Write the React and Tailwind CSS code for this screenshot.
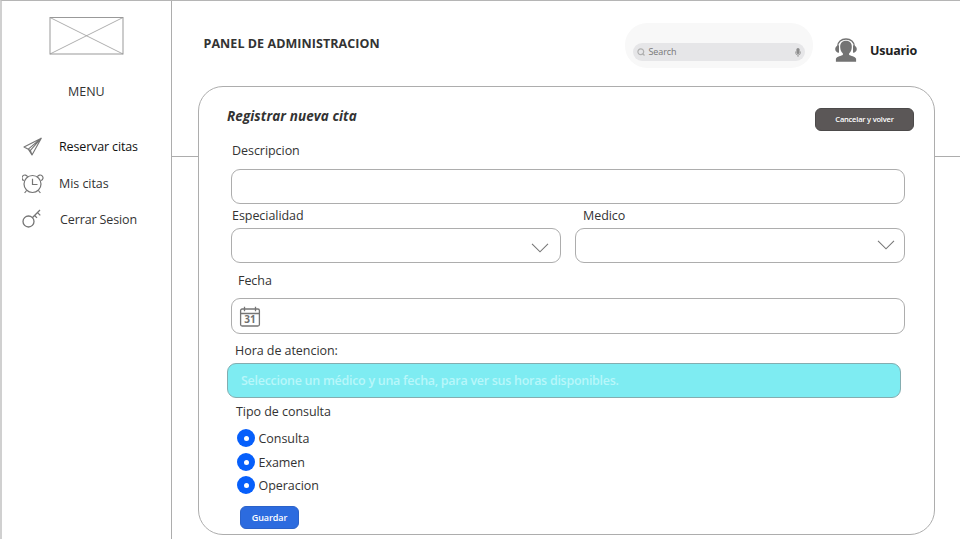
import React from "react";

const base = "whitespace-nowrap leading-[18px]";
const ink = `${base} text-[#333]`;
const label = "h-[18px] whitespace-nowrap text-[12.5px] leading-[20px] tracking-[-0.05px] text-[#333]";

function PlaneIcon() {
  return (
    <svg width="20" height="20" viewBox="0 0 20 20" fill="none" stroke="#757575" strokeWidth="1.1" strokeLinejoin="round">
      <path d="M18.300 1.200 1 10l4.300 2.200L9 18zM18.300 1.200 5.300 12.200M18.300 1.200 7.400 13.400 9 18M5.300 12.200l2.100 1.200" />
    </svg>
  );
}

function ClockIcon() {
  return (
    <svg width="22" height="20" viewBox="0 0 22 20" fill="none" stroke="#757575" strokeWidth="1.2">
      <circle cx="10.500" cy="10" r="8.500" />
      <path d="M10.500 4.800v5.700h5M4.600 16.500 2.600 19M16.400 16.500l2 2.500M1.800 6.600A2.900 2.900 0 1 1 5.600 2.900M19.200 6.600A2.900 2.900 0 1 0 15.400 2.900" />
    </svg>
  );
}

function KeyIcon() {
  return (
    <svg width="20" height="20" viewBox="0 0 20 20" fill="none" stroke="#757575" strokeWidth="1.3">
      <circle cx="6.500" cy="12.500" r="5.500" />
      <path d="M10.300 8.700 18 1M12.600 6.500l2.400 2.400M15.500 3.600l2.800 2.800" />
    </svg>
  );
}

function AgentIcon() {
  return (
    <svg width="22" height="24" viewBox="0 0 22 24" fill="#737373">
      <path d="M2.600 8.800C2.600 4 6.400 1 11 1s8.400 3 8.400 7.800" fill="none" stroke="#737373" strokeWidth="1.400" />
      <path d="M4 7.200v7.600C1.600 14.600.2 13 .2 11s1.400-3.600 3.800-3.800zM18 7.200v7.600c2.400-.2 3.800-1.800 3.800-3.800S20.400 7.400 18 7.200z" />
      <path d="M11 2.800c-3.900 0-6 2.700-5.800 6.400.2 2.800 1.100 4.900 2.700 6.300v1.300C6.500 18 1.700 18.500.9 20.800V23.700h20.200v-2.900c-.8-2.300-5.600-2.800-7-4v-1.300c1.600-1.400 2.500-3.500 2.700-6.300.2-3.700-1.900-6.400-5.800-6.400z" />
    </svg>
  );
}

function CalendarIcon() {
  return (
    <svg width="22" height="22" viewBox="0 0 22 22" fill="none" stroke="#757575" strokeWidth="1.3">
      <rect x="1.600" y="3" width="18.800" height="17" rx="1.500" />
      <path d="M1.600 7.500h18.800M5.500.800v4.500M16.500.800v4.500" />
      <text x="11" y="17.300" textAnchor="middle" fontSize="10" fontWeight="700" fill="#707070" stroke="none">31</text>
    </svg>
  );
}

function Chevron() {
  return (
    <svg width="18" height="10" viewBox="0 0 18 10" fill="none" stroke="#777" strokeWidth="1.1">
      <path d="m1 .8 8 8 8-8" />
    </svg>
  );
}

function MenuItem({ icon, iconBox, children, className }) {
  return (
    <div className="flex h-[36.5px] items-center">
      <span className={iconBox}>{icon}</span>
      <span className={`whitespace-nowrap pt-0.5 text-[12.5px] leading-[18px] ${className}`}>{children}</span>
    </div>
  );
}

function Radio({ label: text, className }) {
  return (
    <label className={`flex items-center ${className}`}>
      <span className="flex size-[18px] items-center justify-center rounded-full bg-[#065ffb]">
        <span className="size-[5px] rounded-full bg-white" />
      </span>
      <span className={`${label} ml-[3.5px]`}>{text}</span>
    </label>
  );
}

const field = "flex items-center rounded-[9px] border border-[#adadad] bg-white";

export default function App() {
  return (
    <div className="flex h-[539px] w-[960px] overflow-hidden border-l-2 border-t border-l-[#d0d0d0] border-t-[#b5b5b5] bg-white font-['Open_Sans','Noto_Sans',sans-serif]">
      <aside className="flex w-[170px] shrink-0 flex-col border-r border-[#adadad]">
        <svg className="ml-[47px] mt-[15px]" width="75" height="39" viewBox="0 0 75 39" fill="none" stroke="#999">
          <rect x="1" y="1.500" width="73" height="36.500" />
          <path d="m1 1.500 73 36.500m0-36.500-73 36.500" strokeWidth=".8" />
        </svg>
        <div className="ml-[66px] mt-[27px] h-[18px] text-[12.5px] leading-[20px] text-[#333]">MENU</div>
        <nav className="mt-[28px]">
          <MenuItem icon={<PlaneIcon />} iconBox="ml-[21px] w-[36px] pt-[2px]" className="tracking-[-0.14px] text-[#111]">Reservar citas</MenuItem>
          <MenuItem icon={<ClockIcon />} iconBox="ml-5 w-[37px] pt-[3px]" className="tracking-[-0.05px] text-[#333]">Mis citas</MenuItem>
          <MenuItem icon={<KeyIcon />} iconBox="ml-[20px] w-[38px]" className="tracking-[-0.12px] text-[#333]">Cerrar Sesion</MenuItem>
        </nav>
      </aside>

      <main className="flex grow flex-col">
        <header className="flex h-[156px] shrink-0 items-start border-b border-[#adadad]">
          <h1 className={`${ink} ml-[31.5px] mt-[34px] w-[421.5px] text-[12.5px] font-bold tracking-[0.06px]`}>PANEL DE ADMINISTRACION</h1>
          <div className="mt-[22px] flex h-[45px] w-[188px] items-end rounded-[22px] bg-[#f8f8f8] px-2 pb-[7px]">
            <div className="flex h-[18px] w-full items-center rounded-full bg-[#e6e6e8] pl-[4px] pr-[4px]">
              <svg width="8" height="8" viewBox="0 0 8 8" fill="none" stroke="#b0b0b0" strokeWidth="1.2">
                <circle cx="3.800" cy="3.800" r="2.900" />
                <path d="m5.500 5.500 2 2" />
              </svg>
              <span className="ml-[3.5px] text-[9px] leading-[18px] tracking-[-0.1px] text-[#777]">Search</span>
              <svg className="ml-auto" width="6" height="9" viewBox="0 0 6 9" fill="#8b8b8b">
                <rect x="1.400" y="0" width="3.200" height="6" rx="1.600" />
                <path d="M.5 3.500v1a2.500 2.500 0 0 0 5 0v-1M3 7v2" fill="none" stroke="#8b8b8b" strokeWidth=".7" />
              </svg>
            </div>
          </div>
          <div className="ml-[22px] mt-[37px]"><AgentIcon /></div>
          <span className={`${base} ml-[13px] mt-[41px] text-[12.5px] font-bold tracking-[-0.25px] text-[#222]`}>Usuario</span>
        </header>

        <section className="z-10 -mt-[71px] ml-[26px] flex h-[449px] w-[737px] shrink-0 flex-col rounded-[25px] border border-[#adadad] bg-white">
          <div className="mt-[20px] flex h-6 items-start justify-between pl-[28px] pr-[20px]">
            <h2 className={`${ink} text-[13.5px] font-bold italic tracking-[0.08px]`}>Registrar nueva cita</h2>
            <button className="mt-px h-[23px] w-[99px] whitespace-nowrap rounded-md border border-[#4c4a4a] bg-[#5b5757] text-[7.5px] font-semibold tracking-[-0.2px] text-white">Cancelar y volver</button>
          </div>

          <label className={`${label} ml-[33px] mt-[10px]`}>Descripcion</label>
          <div className={`${field} ml-8 mt-[10px] h-[35px] w-[674px]`} />

          <div className="ml-8 mt-[2px] flex gap-[14px]">
            <div className="w-[330px]">
              <label className={`${label} ml-px block`}>Especialidad</label>
              <div className={`${field} mt-1 h-[35px] justify-end pr-[11px] pt-[4px]`}><Chevron /></div>
            </div>
            <div className="w-[330px]">
              <label className={`${label} ml-2 block`}>Medico</label>
              <div className={`${field} mt-1 h-[35px] justify-end pr-[9px] pb-px`}><Chevron /></div>
            </div>
          </div>

          <label className={`${label} ml-[39px] mt-[8px]`}>Fecha</label>
          <div className={`${field} ml-8 mt-[9px] h-[36px] w-[674px] pl-[7px] pt-px`}><CalendarIcon /></div>

          <label className={`${label} ml-[36px] mt-[7px]`}>Hora de atencion:</label>
          <div className="ml-7 mt-1 flex h-[35px] w-[674px] items-center whitespace-nowrap rounded-[9px] border border-[#84adb0] bg-[#7eecf2] pl-[13px] pt-px text-[12.5px] font-semibold tracking-[-0.28px] text-[#b8f7fa]">
            Seleccione un médico y una fecha, para ver sus horas disponibles.
          </div>

          <div className={`${label} ml-[37px] mt-[4px]`}>Tipo de consulta</div>
          <div className="ml-[38px] mt-[9px]">
            <Radio label="Consulta" className="h-[18px]" />
            <Radio label="Examen" className="mt-[6px] h-[18px]" />
            <Radio label="Operacion" className="mt-[5px] h-[18px]" />
          </div>
          <button className="ml-[41px] mt-[12px] h-[23px] w-[59px] rounded-md border border-[#2b62c9] bg-[#2c6bdf] text-[9px] font-semibold tracking-[-0.1px] text-white">Guardar</button>
        </section>
      </main>
    </div>
  );
}
